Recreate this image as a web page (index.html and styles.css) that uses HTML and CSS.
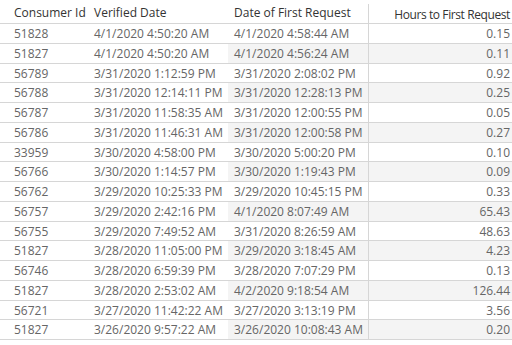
FILE: index.html
```
<!DOCTYPE html>
<html>
<head>
<meta charset="utf-8">
<link rel="stylesheet" href="styles.css">
</head>
<body>
<div class="sheet">
  <div class="row head">
    <div class="c c1">Consumer Id</div>
    <div class="c c2">Verified Date</div>
    <div class="c c3">Date of First Request</div>
    <div class="c c4">Hours to First Request</div>
  </div>
  <div class="row"><div class="c c1">51828</div><div class="c c2">4/1/2020 4:50:20 AM</div><div class="c c3">4/1/2020 4:58:44 AM</div><div class="c c4">0.15</div></div>
  <div class="row band"><div class="c c1">51827</div><div class="c c2">4/1/2020 4:50:20 AM</div><div class="c c3">4/1/2020 4:56:24 AM</div><div class="c c4">0.11</div></div>
  <div class="row"><div class="c c1">56789</div><div class="c c2">3/31/2020 1:12:59 PM</div><div class="c c3">3/31/2020 2:08:02 PM</div><div class="c c4">0.92</div></div>
  <div class="row band"><div class="c c1">56788</div><div class="c c2">3/31/2020 12:14:11 PM</div><div class="c c3">3/31/2020 12:28:13 PM</div><div class="c c4">0.25</div></div>
  <div class="row"><div class="c c1">56787</div><div class="c c2">3/31/2020 11:58:35 AM</div><div class="c c3">3/31/2020 12:00:55 PM</div><div class="c c4">0.05</div></div>
  <div class="row band"><div class="c c1">56786</div><div class="c c2">3/31/2020 11:46:31 AM</div><div class="c c3">3/31/2020 12:00:58 PM</div><div class="c c4">0.27</div></div>
  <div class="row"><div class="c c1">33959</div><div class="c c2">3/30/2020 4:58:00 PM</div><div class="c c3">3/30/2020 5:00:20 PM</div><div class="c c4">0.10</div></div>
  <div class="row band"><div class="c c1">56766</div><div class="c c2">3/30/2020 1:14:57 PM</div><div class="c c3">3/30/2020 1:19:43 PM</div><div class="c c4">0.09</div></div>
  <div class="row"><div class="c c1">56762</div><div class="c c2">3/29/2020 10:25:33 PM</div><div class="c c3">3/29/2020 10:45:15 PM</div><div class="c c4">0.33</div></div>
  <div class="row band"><div class="c c1">56757</div><div class="c c2">3/29/2020 2:42:16 PM</div><div class="c c3">4/1/2020 8:07:49 AM</div><div class="c c4">65.43</div></div>
  <div class="row"><div class="c c1">56755</div><div class="c c2">3/29/2020 7:49:52 AM</div><div class="c c3">3/31/2020 8:26:59 AM</div><div class="c c4">48.63</div></div>
  <div class="row band"><div class="c c1">51827</div><div class="c c2">3/28/2020 11:05:00 PM</div><div class="c c3">3/29/2020 3:18:45 AM</div><div class="c c4">4.23</div></div>
  <div class="row"><div class="c c1">56746</div><div class="c c2">3/28/2020 6:59:39 PM</div><div class="c c3">3/28/2020 7:07:29 PM</div><div class="c c4">0.13</div></div>
  <div class="row band"><div class="c c1">51827</div><div class="c c2">3/28/2020 2:53:02 AM</div><div class="c c3">4/2/2020 9:18:54 AM</div><div class="c c4">126.44</div></div>
  <div class="row"><div class="c c1">56721</div><div class="c c2">3/27/2020 11:42:22 AM</div><div class="c c3">3/27/2020 3:13:19 PM</div><div class="c c4">3.56</div></div>
  <div class="row band"><div class="c c1">51827</div><div class="c c2">3/26/2020 9:57:22 AM</div><div class="c c3">3/26/2020 10:08:43 AM</div><div class="c c4">0.20</div></div>
</div>
</body>
</html>
```

FILE: styles.css
```
html, body {
  margin: 0;
  padding: 0;
  background: #ffffff;
}
body {
  font-family: "Open Sans", "Liberation Sans", sans-serif;
  font-size: 12px;
  color: #666666;
  overflow: hidden;
}
.sheet {
  width: 512px;
}
.row {
  display: grid;
  grid-template-columns: 90px 138px 140px 1fr;
  height: 19.75px;
  border-bottom: 1px solid #d6d6d6;
  box-sizing: border-box;
}
.row.head {
  height: 24px;
  color: #333333;
}
.c {
  white-space: nowrap;
  line-height: 19px;
}
.head .c {
  line-height: 26px;
}
.c1 { padding-left: 14px; }
.c2 { padding-left: 4px; }
.c3 { padding-left: 6px; }
.c4 {
  border-left: 1px solid #d6d6d6;
  text-align: right;
  padding-right: 2px;
}
.head .c4 {
  margin-top: 4px;
  line-height: 22px;
  letter-spacing: -0.4px;
}
.band .c3, .band .c4 {
  background: #f4f4f4;
}
```
